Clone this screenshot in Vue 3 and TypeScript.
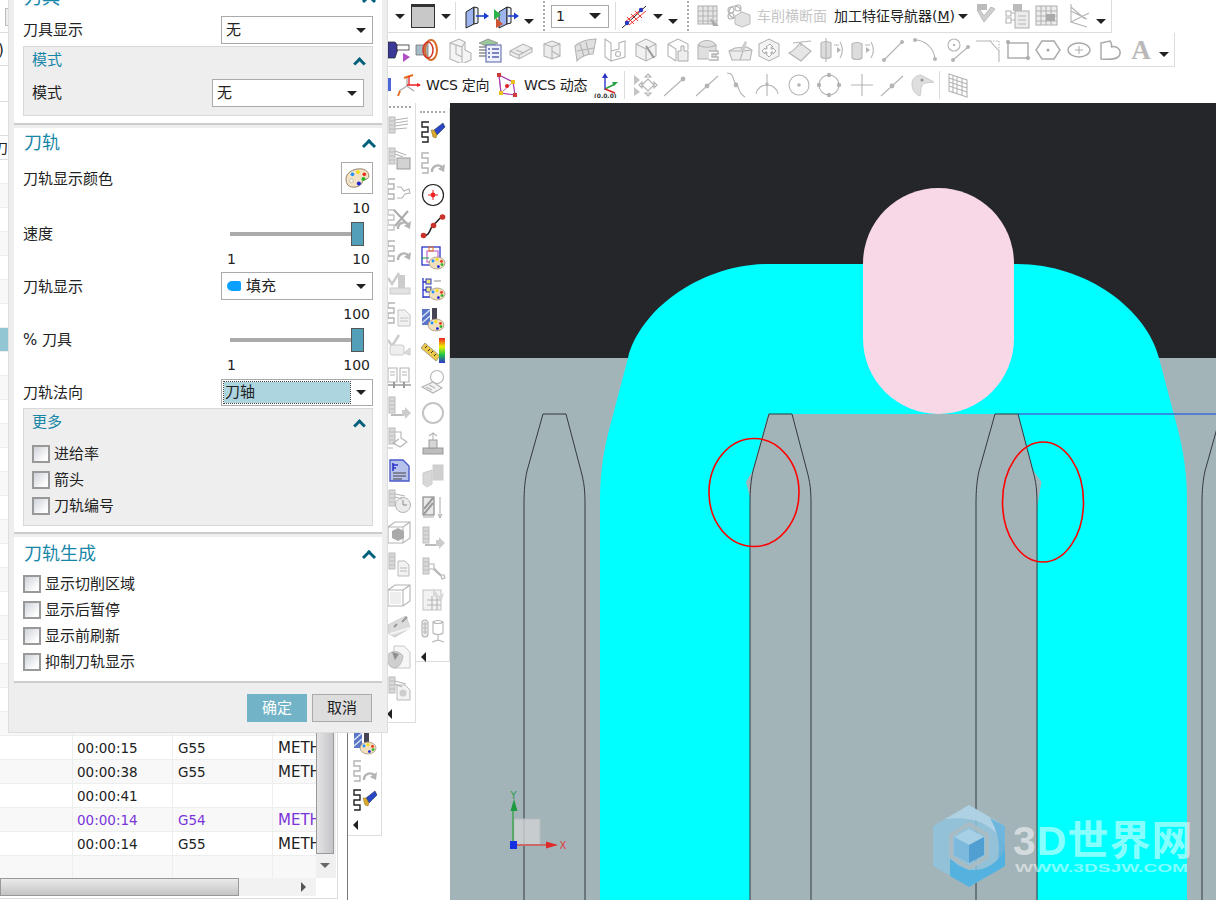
<script setup lang="ts">
type Kind = 'i' | 'a' | 'al' | 'g' | 's' | 't' | 'nav' | 'sel' | 'wcs'
interface Raw { k: Kind; c: number; w: number; n?: string; text?: string }
interface Placed extends Raw { ml: number }

function place(items: Raw[], start: number): Placed[] {
  let right = start
  return items.map((it) => {
    const left = it.c - it.w / 2
    const ml = left - right
    right = left + it.w
    return { ...it, ml }
  })
}
const ic = (c: number, n: string, w = 26): Raw => ({ k: 'i', c, w, n })

const g = (s: string) => `<g fill="none" stroke="#b4b4b4" stroke-width="1.1">${s}</g>`
const zig = (col: string) => `<path d="M9 2H2v5h6v5H2v5h6v5H2" fill="none" stroke="${col}" stroke-width="1.4"/>`
const mill = `<g stroke="#bdbdbd" fill="#d8d8d8"><rect x="3" y="2" width="6" height="16"/><path d="M3 6h6M3 10h6M3 14h6" fill="none"/></g>`
const pal = (x: number, y: number) => `<g transform="translate(${x} ${y})"><ellipse cx="8" cy="6" rx="8" ry="6" fill="#f1dfbd" stroke="#9a8a70" stroke-width=".7"/><circle cx="4" cy="4" r="1.4" fill="#1e90ff"/><circle cx="8" cy="2.6" r="1.4" fill="#f4e000"/><circle cx="12.5" cy="4.4" r="1.4" fill="#e8331c"/><circle cx="13" cy="7.6" r="1.4" fill="#28b528"/><circle cx="9.4" cy="9.6" r="1.4" fill="#1a22d0"/></g>`
const back = `<path d="M12 21a6 6 0 0 1 10-5" fill="none" stroke="#b4b4b4" stroke-width="2.4"/><path d="M25 13l-1 8-6-3z" fill="#b4b4b4"/>`

const icons: Record<string, string> = {
  solid: `<rect x="1.5" y="1.5" width="23" height="23" fill="#c8c8c8" stroke="#333"/><rect x="1" y="1" width="24" height="3" fill="#333"/>`,
  ext1: `<path d="M2 9l8-5v17l-8 4z" fill="#9db4ee" stroke="#222"/><path d="M10 4l4 1v15l-4 1z" fill="#e8edfa" stroke="#222"/><path d="M12 13h10" stroke="#1c3fd0" stroke-width="1.6"/><path d="M25 13l-5-3.5v7z" fill="#1c3fd0"/>`,
  ext2: `<path d="M6 9l8-5v17l-8 4z" fill="#9db4ee" stroke="#222"/><path d="M14 4l4 1v15l-4 1z" fill="#e8edfa" stroke="#222"/><path d="M1 6l7 6-7 5z" fill="#2fb24a"/><path d="M3 15l7 6-7 4z" fill="#cc5533"/><path d="M15 13h8" stroke="#1c3fd0" stroke-width="1.6"/><path d="M26 13l-5-3.5v7z" fill="#1c3fd0"/>`,
  hatch: `<path d="M1 25L25 3" stroke="#222"/><path d="M6 14l7 7M10 11l7 7M14 8l7 7M4 19l18-14M8 22l17-14" stroke="#e22" stroke-width=".9"/><circle cx="6" cy="20" r="2.2" fill="#2438c8"/><circle cx="20" cy="7" r="2.2" fill="#2438c8"/>`,
  table: g(`<rect x="3" y="3" width="19" height="18" fill="#e6e6e6"/><path d="M3 8h19M3 13h19M3 18h19M8 3v18M13 3v18M18 3v18"/>`) + `<path d="M15 15l9 8h-6z" fill="#aaa"/>`,
  gear: g(`<circle cx="9" cy="9" r="6"/><circle cx="5" cy="7" r="3"/><circle cx="12" cy="5" r="3"/><circle cx="5" cy="13" r="3"/>`) + `<path d="M9 13l7-4 8 3v9l-8 3-7-3z" fill="#e2e2e2" stroke="#bbb"/>`,
  g1: `<rect x="5" y="1" width="10" height="6" fill="#bbb"/>` + `<path d="M5 7l7 12 11-13-4-2-7 9-4-6z" fill="#cfcfcf" stroke="#bbb"/>`,
  g2: g(`<rect x="2" y="8" width="5" height="5"/><rect x="2" y="15" width="5" height="5"/><rect x="11" y="8" width="14" height="17" fill="#ececec"/><path d="M14 13h8M14 17h8M14 21h8M7 10h4M7 17h4"/>`) + `<rect x="9" y="1" width="9" height="7" fill="#bbb"/>`,
  g3: g(`<rect x="2" y="3" width="21" height="19" fill="#ececec"/><path d="M2 8h21M2 13h21M2 18h21M7 3v19M12 3v19M17 3v19"/>`) + `<rect x="12" y="11" width="9" height="7" fill="#aaa"/>`,
  g4: g(`<path d="M6 1v18l16 5M6 19l18-9M6 8l16 8M6 4l14 12"/>`),
  bluepart: `<rect x="23" y="6" width="3" height="13" fill="#4a66d8"/>`,
  tool: `<path d="M1 5h7l3 4h8v3h-8l-3 9H1z" fill="#3a3a96" stroke="#222" stroke-width=".7"/><rect x="10" y="8" width="12" height="5" fill="#fff" stroke="#333" stroke-width=".8"/><path d="M16 16l7 4-7 5z" fill="#b14fc4"/>`,
  spindle: `<path d="M2 8h8l4-4v18l-4-4H2z" fill="#a9bdc9" stroke="#666" stroke-width=".7"/><ellipse cx="17" cy="13" rx="6" ry="10" fill="none" stroke="#d86a2a" stroke-width="2"/><ellipse cx="14" cy="13" rx="5" ry="8" fill="none" stroke="#d0342a" stroke-width="1.5"/>`,
  wirehouse: g(`<path d="M3 6l9-4 6 3v8l6 3v7l-9 4-12-5z" fill="#f4f4f4"/><path d="M3 6l12 4v18M15 10l3-5M9 8v9l6 3"/>`),
  stack: `<path d="M2 6l9-4 10 4-10 4z" fill="#9cc69c" stroke="#777" stroke-width=".6"/><path d="M2 10h10M2 13h10M2 16h10M2 19h10" stroke="#555"/><rect x="9" y="8" width="15" height="17" fill="#eef1fb" stroke="#5560aa"/><path d="M11 12h2M15 12h7M11 16h2M15 16h7M11 20h2M15 20h7" stroke="#5560aa" stroke-width="1.3"/>`,
  plate: g(`<path d="M2 14l13-7 9 4v4l-13 7-9-4z" fill="#ececec"/><path d="M2 14l9 4v4M11 18l13-7M8 13l8 3"/>`),
  block: g(`<path d="M4 7l8-3 8 3v12l-8 3-8-3z" fill="#ececec"/><path d="M4 7l8 3 8-3M12 10v12"/><path d="M12 14l8 5"/>`) ,
  surf: g(`<path d="M3 9c6-5 15-7 21-7l-3 15C15 17 8 20 5 24z" fill="#e0e0e0"/><path d="M8 7l4 12M14 5l3 12M5 14l17-3"/>`),
  wall: g(`<path d="M3 2v18l6 4V6zM9 24l14-4V4l-6 2v6l-8 2"/><circle cx="16" cy="17" r="2.5"/>`),
  wand: g(`<path d="M3 7l10-5 10 5v12l-10 5-10-5z" fill="#f1f1f1"/><path d="M3 7l10 5 10-5M13 12v12"/>`) + `<path d="M13 9l8 12" stroke="#999" stroke-width="2"/>`,
  hand: g(`<path d="M3 7l10-5 10 5v6M3 7v12l8 5M3 7l8 5v12"/>`) + `<path d="M13 14h3V9h3v5h4v10H13z" fill="#eee" stroke="#aaa"/>`,
  cylpath: g(`<path d="M3 8c4-6 14-6 18 0v14H3z" fill="#dfdfdf"/><path d="M3 8c5 3 13 3 18 0"/><path d="M14 14h9v3h-6v3h6v3h-9" stroke-width="1.4" fill="#fff"/>`),
  tray: g(`<path d="M2 14l6-3 12-1 5 3-2 10H5z" fill="#ececec"/><path d="M2 14h14l9-1M16 14l-3 9"/>`) + `<path d="M13 13l5-9 2 1-3 9z" fill="#ccc"/>`,
  move: g(`<path d="M3 7l10-5 10 5v12l-10 5-10-5z" fill="#f3f3f3"/>`) + `<path d="M14 7l3 3h-2v2h2v-1l3 3-3 3v-2h-2v2h1l-3 3-3-3h1v-2h-2v2l-3-3 3-3v1h2v-2h-1z" fill="#fff" stroke="#999" stroke-width=".8"/>`,
  curved: g(`<path d="M2 16c4-2 8-6 11-10l11 8c-3 3-7 7-10 10z" fill="#e6e6e6"/><path d="M6 6l18-2M14 5l0 4"/>`),
  cyl1: g(`<path d="M3 6c2-2 8-2 10 0v14c-2 2-8 2-10 0z" fill="#dcdcdc"/><path d="M8 1v24M16 8h5M22 5c3 5 3 11 0 16"/>`) + `<path d="M19 10l4 3-4 3z" fill="#b4b4b4"/>`,
  cyl2: g(`<path d="M3 7c2-2 8-2 10 0v14c-2 2-8 2-10 0z" fill="#dcdcdc"/><path d="M16 8h5M22 5c3 5 3 11 0 16"/>`) + `<path d="M17 10l4 3-4 3z" fill="#b4b4b4"/>`,
  line: g(`<path d="M4 23L22 5"/>`) + `<circle cx="4" cy="23" r="2" fill="#b4b4b4"/><circle cx="22" cy="5" r="2" fill="#b4b4b4"/>`,
  arc: g(`<path d="M3 3c10 0 19 8 20 19"/>`) + `<circle cx="3" cy="3" r="2" fill="#b4b4b4"/><circle cx="23" cy="22" r="2" fill="#b4b4b4"/>`,
  arcc: g(`<circle cx="9" cy="8" r="6"/><path d="M8 23L23 10"/>`) + `<circle cx="9" cy="8" r="1" fill="#999"/><circle cx="8" cy="23" r="2" fill="#b4b4b4"/><circle cx="23" cy="10" r="2" fill="#b4b4b4"/>`,
  fillet: g(`<path d="M1 4h14l9 10v11"/><path d="M15 4h9v10" stroke-dasharray="1.5 1.5"/>`),
  rect: `<rect x="3" y="6" width="20" height="15" fill="none" stroke="#a8a8a8" stroke-width="1.4"/><circle cx="3" cy="5" r="2" fill="#aaa"/><circle cx="23" cy="21" r="2" fill="#aaa"/>`,
  hex: `<path d="M7 4h12l6 9-6 9H7l-6-9z" fill="none" stroke="#a8a8a8" stroke-width="1.4"/><circle cx="13" cy="13" r="1.6" fill="#aaa"/>`,
  ell: `<ellipse cx="13" cy="13" rx="11" ry="7" fill="none" stroke="#a8a8a8" stroke-width="1.4"/><path d="M13 9v8M9 13h8" stroke="#aaa"/>`,
  spline: `<path d="M4 6l9-2c2 3 2 5 1 6 6-2 10 3 9 7-1 5-7 6-19 5z" fill="none" stroke="#a8a8a8" stroke-width="1.4"/>`,
  wcs1: `<path d="M11 14l-8 5M11 14v-9M11 14l7 5" stroke="#aaa" stroke-width="1.3"/><path d="M4 19l-2 5M8 6l9-3" stroke="#e87020" stroke-width="2"/><path d="M11 13h13M13 4v9" stroke="#e22" stroke-width="1.3"/><path d="M25 13l-4-2v4z" fill="#e22"/>`,
  wcs2: `<path d="M5 3l14 7 2 13-14-2z" fill="none" stroke="#a93cae" stroke-width="1.2"/><path d="M5 3l2 18M19 10L7 21" stroke="#a93cae" stroke-width=".8"/><rect x="3" y="1" width="4" height="4" fill="#cc3a3a"/><rect x="17" y="8" width="4" height="4" fill="#e9c01f"/><rect x="19" y="21" width="4" height="4" fill="#cc3a3a"/><rect x="5" y="19" width="4" height="4" fill="#e9c01f"/><circle cx="13" cy="14" r="2" fill="#d22"/>`,
  wcs3: `<path d="M11 18V4" stroke="#2a35c8" stroke-width="1.4"/><path d="M11 1l-3 5h6z" fill="#2a35c8"/><path d="M11 17l10-5" stroke="#25a040" stroke-width="1.4"/><path d="M24 10l-6 0 2 4z" fill="#25a040"/><path d="M11 17l10 4" stroke="#d22" stroke-width="1.4"/><text x="0" y="26" font-size="6" font-weight="700" font-family="DejaVu Sans" fill="#333">(0,0,0)</text>`,
  ptdlg: `<path d="M2 3l6 5-6 5zM2 15l6 5-6 4z" fill="#c4c4c4"/>` + g(`<path d="M10 13l6-6 6 6-6 6zM16 2l3 3h-6zM16 24l3-3h-6zM25 13l-3 3v-6zM7 13l3 3v-6z"/>`),
  lnpt: g(`<path d="M2 24L22 6"/>`) + `<circle cx="21" cy="7" r="2.4" fill="#b4b4b4"/>`,
  lnmid: g(`<path d="M2 24L24 4"/>`) + `<circle cx="13" cy="14" r="2.4" fill="#b4b4b4"/>`,
  sc: g(`<path d="M4 1c8 0 5 8 9 11s1 8 9 13"/>`) + `<circle cx="13" cy="13" r="2.4" fill="#b4b4b4"/>`,
  arcv: g(`<path d="M2 22c2-12 20-12 22 0M13 2v22"/>`) + `<circle cx="13" cy="12" r="1.6" fill="#b4b4b4"/>`,
  cir: g(`<circle cx="13" cy="13" r="10"/>`) + `<circle cx="13" cy="13" r="1.8" fill="#b4b4b4"/>`,
  cir4: g(`<circle cx="13" cy="13" r="10"/>`) + `<g fill="#b4b4b4"><circle cx="13" cy="3" r="2.2"/><circle cx="13" cy="23" r="2.2"/><circle cx="3" cy="13" r="2.2"/><circle cx="23" cy="13" r="2.2"/></g>`,
  plus: g(`<path d="M13 2v22M2 13h22"/>`),
  curvesurf: `<path d="M3 12c0-6 5-9 9-9l13 7-8 1c-3 0-5 3-5 7l-1 6c-5-2-8-6-8-12z" fill="#dedede" stroke="#ccc"/><circle cx="13" cy="8" r="1.6" fill="#999"/>`,
  grid: g(`<path d="M4 2l18 6v17L4 19zM4 6l18 6M4 10l18 6M4 14l18 6M8 3v17M12 5v17M17 6v17"/>`),
  flash: zig('#222') + `<path d="M14 10l9-7 2 4-8 8z" fill="#2a46c8" stroke="#123" stroke-width=".5"/><path d="M11 10l3 0 3 5-1 3-3-1z" fill="#d9a92c" stroke="#8a7020" stroke-width=".5"/>`,
  pback: zig('#b4b4b4') + back,
  target: `<circle cx="13" cy="13" r="10.5" fill="none" stroke="#222" stroke-width="1.2"/><path d="M13 8v10M8 13h10" stroke="#e22"/><circle cx="13" cy="13" r="2.4" fill="#e22"/>`,
  curve: `<path d="M3 23c8 0 7-10 11-12s4-6 9-7" fill="none" stroke="#222" stroke-width="1.5"/><g fill="#c8332a"><circle cx="3.5" cy="22.5" r="2.8"/><circle cx="13.5" cy="12.5" r="2.8"/><circle cx="22.5" cy="4" r="2.8"/></g>`,
  palsq: `<rect x="2" y="2" width="18" height="18" fill="none" stroke="#2a35c8" stroke-width="1.3"/><rect x="7" y="6" width="11" height="11" fill="none" stroke="#b14fc4"/><rect x="9" y="2" width="4" height="4" fill="none" stroke="#e87020"/><path d="M1 13h8" stroke="#25a040"/>` + pal(9, 12),
  paltree: `<path d="M3 2v20M3 6h4M3 14h4M3 21h7" stroke="#2a35c8" stroke-width="1.3"/><rect x="6" y="3" width="5" height="5" fill="#e8e57a" stroke="#2a35c8"/><rect x="6" y="11" width="5" height="5" fill="#e8e57a" stroke="#2a35c8"/><path d="M14 5h7" stroke="#888"/>` + pal(9, 12),
  paltool: `<rect x="2" y="2" width="8" height="16" fill="#5a74c8"/><path d="M2 10L10 3M2 16L10 9" stroke="#d9e3f5" stroke-width="1.5"/><rect x="12" y="1" width="5" height="13" fill="#445"/>` + pal(8, 12),
  ruler: `<path d="M1 10l15 13 4-5L5 5z" fill="#e9c84a" stroke="#777" stroke-width=".6"/><path d="M5 10l2-2M8 13l2-2M11 15l2-2M14 18l2-2" stroke="#333"/><defs><linearGradient id="rb" x1="0" y1="0" x2="0" y2="1"><stop offset="0" stop-color="#e22"/><stop offset=".35" stop-color="#ee0"/><stop offset=".65" stop-color="#2c4"/><stop offset="1" stop-color="#33c"/></linearGradient></defs><rect x="19" y="0" width="6" height="25" fill="url(#rb)"/>`,
  tag: g(`<circle cx="17" cy="8" r="6.5"/><path d="M2 18l11-5 9 6-9 5z" fill="#f2f2f2"/><path d="M6 18l6 3M9 16l6 3"/>`),
  ring: `<circle cx="13" cy="13" r="10" fill="none" stroke="#c4c4c4" stroke-width="2"/>`,
  base: `<rect x="3" y="17" width="20" height="6" fill="#bdbdbd" stroke="#999"/><rect x="9" y="9" width="8" height="8" fill="#d6d6d6" stroke="#999"/>` + g(`<path d="M13 9V2M9 5l4-3 4 3"/>`),
  cylpair: `<path d="M3 10l9-3v14l-5 3-4-3z" fill="#d8d8d8" stroke="#ccc"/><rect x="13" y="2" width="10" height="15" fill="#cfcfcf" stroke="#ccc"/>`,
  hatchd: `<rect x="3" y="3" width="11" height="18" fill="#e8e8e8" stroke="#777"/><path d="M4 15L13 4M4 20L13 9" stroke="#999" stroke-width="2"/><path d="M3 23h11" stroke="#aaa"/><path d="M20 3v20M18 20l2 4 2-4" fill="none" stroke="#aaa"/>`,
  millarr: mill + `<path d="M5 20h12" stroke="#bbb" stroke-width="2"/><path d="M16 15h3v-3l6 6-6 6v-3h-3z" fill="#ccc"/>`,
  wrench: mill + g(`<path d="M9 8h5v4l7 7h3l1 3-3 1-1-3-8-7H9"/>`),
  paltable: `<rect x="3" y="3" width="18" height="20" fill="#f2f2f2" stroke="#c4c4c4"/>` + g(`<path d="M7 13h14M7 18h14M12 9v14M17 9v14"/>`) + `<path d="M13 1l6 8 5-3-2 7-9-4z" fill="#d8d8d8"/>`,
  iocyl: g(`<rect x="2" y="2" width="6" height="17" rx="3" fill="#eee"/><circle cx="5" cy="6" r="1.2"/><circle cx="5" cy="10" r="1.2"/><circle cx="5" cy="14" r="1.2"/><path d="M13 4c2-2 8-2 10 0v11c-2 2-8 2-10 0zM13 4c2 2 8 2 10 0M18 17v5l-6 2M18 22l6 2"/>`),
  mill1: mill + g(`<path d="M9 5l13-2M9 8l13-2M9 11l13-2M9 14l12-1"/>`),
  millbox: mill + `<rect x="11" y="12" width="13" height="11" fill="#d2d2d2" stroke="#999"/>` + g(`<path d="M9 5l11 4M9 8l8 3"/>`),
  pwrench: zig('#b4b4b4') + g(`<path d="M11 10h4l3 4 5-2 1 4-5 1-3 4h-5"/>`),
  px: zig('#c4c4c4') + `<path d="M8 2l15 16M22 3L9 18" stroke="#aaa" stroke-width="2"/>` + back,
  checkmill: `<path d="M2 8l4 6 7-11" fill="none" stroke="#ccc" stroke-width="2.5"/><rect x="12" y="5" width="7" height="13" fill="#ccc"/><rect x="4" y="18" width="20" height="6" fill="#e2e2e2" stroke="#ccc"/>`,
  pdoc: zig('#b4b4b4') + `<path d="M12 9h7l5 5v11H12z" fill="#f1f1f1" stroke="#c4c4c4"/><path d="M14 17h8M14 20h8" stroke="#c4c4c4"/>`,
  checkm: `<path d="M2 7l4 6 7-11" fill="none" stroke="#ccc" stroke-width="2.5"/><rect x="4" y="12" width="14" height="10" rx="2" fill="#eee" stroke="#ccc"/><path d="M18 20l6-5v7z" fill="#ddd" stroke="#ccc"/>`,
  books: g(`<path d="M2 4h9v14H2zM14 4h9v14h-9zM4 8h5M4 11h5M16 8h5M16 11h5"/>`) + `<path d="M1 21h24" stroke="#b4b4b4" stroke-width="2"/><path d="M8 18v6M18 18v6" stroke="#999" stroke-width="2"/>`,
  millmach: mill + g(`<path d="M9 6h6v6l6 4-7 5-7-4 6-4M2 22h5"/>`),
  docblue: `<path d="M4 3h13l6 6v15H4z" fill="#b7c2ec" stroke="#4a5ac8" stroke-width="1.4"/><path d="M7 6v8M7 8h5M7 11h3" stroke="#2a35c8" stroke-width="1.6"/><path d="M7 16h13M7 19h13M7 22h9" stroke="#444"/>`,
  millclock: mill + `<circle cx="17" cy="17" r="7.5" fill="#ececec" stroke="#b4b4b4"/><path d="M17 12v5h4" stroke="#888" fill="none"/>` + g(`<path d="M9 6l10 2M9 9l7 2"/>`),
  cubewire: g(`<path d="M2 8l7-5h15v16l-7 5H2zM2 8h15v16M17 8l7-5"/>`) + `<path d="M6 12l6-3 6 3v7l-6 3-6-3z" fill="#aaa"/>`,
  milldoc: mill + `<path d="M12 10h7l4 4v11H12z" fill="#f2f2f2" stroke="#bbb"/><path d="M14 17h7M14 20h7" stroke="#bbb"/>`,
  wirebox: g(`<path d="M2 8l7-5h15v16l-7 5H2zM2 8h15v16M17 8l7-5"/>`) + `<rect x="4" y="10" width="11" height="12" fill="#eee"/>`,
  pin: `<path d="M2 12L20 3l4 12-15 9-6-3z" fill="#dcdcdc" stroke="#ccc"/><path d="M8 14l3-3M16 9l5-5" stroke="#999" stroke-width="2"/><path d="M4 21l20-6" stroke="#f5f5f5" stroke-width="2"/>`,
  bowl: `<path d="M8 2h10l6 6v16H8z" fill="#f6f6f6" stroke="#c8c8c8"/><path d="M1 12c3-6 12-6 16 0-1 8-5 12-9 12s-7-5-7-12z" fill="#cfcfcf" stroke="#bbb"/><path d="M6 8l7 2-4 6z" fill="#8e8e8e"/>`,
  milldisc: mill + `<path d="M11 10h8l5 5v10H11z" fill="#f2f2f2" stroke="#bbb"/><circle cx="17" cy="18" r="3.5" fill="#cdcdcd"/>` + g(`<path d="M9 6l11 3M9 9l7 3"/>`),
}

const row1 = place([
  { k: 'a', c: 400, w: 12 }, ic(423, 'solid'), { k: 'a', c: 446, w: 12 }, { k: 's', c: 456, w: 3 },
  ic(477, 'ext1'), ic(506, 'ext2'), { k: 'al', c: 529, w: 12 }, { k: 'g', c: 544, w: 3 },
  { k: 'sel', c: 580, w: 58, text: '1' }, { k: 's', c: 616, w: 3 }, ic(634, 'hatch'),
  { k: 'a', c: 658, w: 12 }, { k: 'al', c: 673, w: 12 }, { k: 'g', c: 688, w: 3 },
  ic(708, 'table'), ic(739, 'gear'), { k: 't', c: 792, w: 70, text: '车削横断面' },
  { k: 'nav', c: 894.5, w: 121 }, { k: 'a', c: 963, w: 12 },
  ic(985, 'g1'), ic(1017, 'g2'), ic(1047, 'g3'), ic(1078, 'g4'), { k: 'al', c: 1101, w: 12 },
], 385)

const row2Names: [number, string][] = [
  [400, 'tool'], [427, 'spindle'], [460, 'wirehouse'], [490, 'stack'], [521, 'plate'], [553, 'block'],
  [585, 'surf'], [615, 'wall'], [646, 'wand'], [678, 'hand'], [708, 'cylpath'], [740, 'tray'],
  [769, 'move'], [800, 'curved'], [831, 'cyl1'], [862, 'cyl2'], [893, 'line'], [925, 'arc'],
  [958, 'arcc'], [988, 'fillet'], [1018, 'rect'], [1048, 'hex'], [1079, 'ell'], [1110, 'spline'],
]
const row2 = place([
  ...row2Names.map(([c, n]) => ic(c, n)),
  { k: 'i', c: 1141, w: 26, n: 'aglyph' },
  { k: 'al', c: 1164, w: 12 },
], 385)

const row3 = place([
  ic(378, 'bluepart'), ic(409, 'wcs1'), { k: 'wcs', c: 457.5, w: 63, text: 'WCS 定向' }, ic(507, 'wcs2'),
  { k: 'wcs', c: 556, w: 64, text: 'WCS 动态' }, ic(607, 'wcs3'), { k: 's', c: 625, w: 3 },
  ic(645, 'ptdlg'), ic(675, 'lnpt'), ic(707, 'lnmid'), ic(736, 'sc'), ic(767, 'arcv'), ic(799, 'cir'),
  ic(829, 'cir4'), ic(862, 'plus'), ic(892, 'lnmid'), ic(922, 'curvesurf'), { k: 's', c: 940, w: 3 }, ic(958, 'grid'),
], 385)

const col1 = ['mill1', 'millbox', 'pwrench', 'px', 'pback', 'checkmill', 'pdoc', 'checkm', 'books', 'millarr', 'millmach', 'docblue', 'millclock', 'cubewire', 'milldoc', 'wirebox', 'pin', 'bowl', 'milldisc']
const col2 = ['flash', 'pback', 'target', 'curve', 'palsq', 'paltree', 'paltool', 'ruler', 'tag', 'ring', 'base', 'cylpair', 'hatchd', 'millarr', 'wrench', 'paltable', 'iocyl']
const col3 = ['paltool', 'pback', 'flash']

interface Row { time: string; wcs: string; m: string; cls: string }
const blank: Row = { time: '', wcs: '', m: '', cls: '' }
const rows: Row[] = [
  ...Array.from({ length: 24 }, (_, i) => ({ ...blank, cls: i === 7 ? 'sel-row' : '' })),
  { time: '00:00:15', wcs: 'G55', m: 'METH', cls: '' },
  { time: '00:00:38', wcs: 'G55', m: 'METH', cls: '' },
  { time: '00:00:41', wcs: '', m: '', cls: '' },
  { time: '00:00:14', wcs: 'G54', m: 'METH', cls: 'purple' },
  { time: '00:00:14', wcs: 'G55', m: 'METH', cls: '' },
  { ...blank },
]

const tools = [524, 750, 976, 1202]
const toolPath = (x: number) =>
  `M${x} 900V503C${x} 490 ${x + 1} 480 ${x + 3} 471L${x + 19} 414H${x + 42}L${x + 57} 471C${x + 60} 482 ${x + 61} 490 ${x + 61} 503V900`

const checks1 = ['进给率', '箭头', '刀轨编号']
const checks2 = ['显示切削区域', '显示后暂停', '显示前刷新', '抑制刀轨显示']
</script>

<template>
  <div class="app">
    <aside class="left">
      <div class="left-inner">
        <div class="strip s1"><span class="mini-box"></span></div>
        <div class="strip s2"><span class="paren">)</span></div>
        <div class="strip s3"></div>
        <div class="strip s4"></div>
        <div class="thead"><span>刀具</span></div>
        <div class="tbody">
          <div class="rows">
            <div v-for="(r, i) in rows" :key="i" class="row" :class="r.cls">
              <span class="cell"></span>
              <span class="cell">{{ r.time }}</span>
              <span class="cell">{{ r.wcs }}</span>
              <span class="cell">{{ r.m }}</span>
            </div>
          </div>
          <div class="vscroll">
            <div class="vthumb"></div>
            <div class="varrow"></div>
          </div>
        </div>
        <div class="hscroll">
          <div class="hthumb"></div>
          <div class="harrow"></div>
        </div>
      </div>
    </aside>

    <main class="right">
      <div class="tb r1">
        <div v-for="(it, i) in row1" :key="i" class="item" :class="'k-' + it.k" :style="{ width: it.w + 'px', marginLeft: it.ml + 'px' }">
          <svg v-if="it.k === 'i'" viewBox="0 0 26 26" width="26" height="26" v-html="icons[it.n as string]"></svg>
          <template v-else-if="it.k === 't'">{{ it.text }}</template>
          <template v-else-if="it.k === 'nav'">加工特征导航器(<u>M</u>)</template>
          <template v-else-if="it.k === 'sel'"><span>{{ it.text }}</span><i class="tri"></i></template>
          <i v-else-if="it.k === 'a' || it.k === 'al'" class="tri"></i>
        </div>
      </div>
      <div class="tb r2">
        <div v-for="(it, i) in row2" :key="i" class="item" :class="'k-' + it.k" :style="{ width: it.w + 'px', marginLeft: it.ml + 'px' }">
          <span v-if="it.n === 'aglyph'" class="a-glyph">A</span>
          <svg v-else-if="it.k === 'i'" viewBox="0 0 26 26" width="26" height="26" v-html="icons[it.n as string]"></svg>
          <i v-else-if="it.k === 'al'" class="tri"></i>
        </div>
      </div>
      <div class="tb r3">
        <div v-for="(it, i) in row3" :key="i" class="item" :class="'k-' + it.k" :style="{ width: it.w + 'px', marginLeft: it.ml + 'px' }">
          <svg v-if="it.k === 'i'" viewBox="0 0 26 26" width="26" height="26" v-html="icons[it.n as string]"></svg>
          <template v-else-if="it.k === 'wcs'">{{ it.text }}</template>
        </div>
      </div>

      <div class="lower">
        <div class="vcol c3">
          <div v-for="n in col3" :key="n" class="vcell short"><svg viewBox="0 0 26 26" width="26" height="26" v-html="icons[n]"></svg></div>
          <div class="varr short-arr"><i></i></div>
        </div>
        <div class="vcol c1">
          <div class="grip"></div>
          <div v-for="n in col1" :key="n" class="vcell"><svg viewBox="0 0 26 26" width="26" height="26" v-html="icons[n]"></svg></div>
          <div class="varr"><i></i></div>
        </div>
        <div class="vcol c2">
          <div class="grip g2"></div>
          <div v-for="n in col2" :key="n" class="vcell"><svg viewBox="0 0 26 26" width="26" height="26" v-html="icons[n]"></svg></div>
          <div class="varr"><i></i></div>
        </div>

        <svg class="view" viewBox="450 103 766 797" width="766" height="797">
          <rect x="450" y="103" width="766" height="255" fill="#24262a" />
          <rect x="450" y="358" width="766" height="542" fill="#a3b4b9" />
          <path
            d="M600 900V500C600 465 606 440 613 415L628 358C640 310 700 264 770 264H1017C1087 264 1147 310 1159 358L1174 415C1181 440 1187 465 1187 500V900H1037V508L1041.5 482L1033 470L1018 414H768L753 470L746 482L750 497V900Z"
            fill="#00ffff"
          />
          <rect x="863" y="188" width="151" height="226" rx="75.5" fill="#f8d7e6" />
          <path d="M1018 414H1216" stroke="#3a6fd8" stroke-width="1.5" />
          <path v-for="x in tools" :key="x" :d="toolPath(x)" fill="none" stroke="#33393c" stroke-width="1" />
          <ellipse cx="754" cy="492.5" rx="45" ry="54" fill="none" stroke="#f00" stroke-width="1.6" />
          <ellipse cx="1043" cy="502" rx="40.5" ry="60" fill="none" stroke="#f00" stroke-width="1.6" />

          <rect x="514" y="819" width="26" height="26" fill="#d0d2d4" fill-opacity=".8" stroke="#b8bcbe" />
          <path d="M513 845V806" stroke="#58a868" stroke-width="2" />
          <path d="M514 799l-3.5 12h7z" fill="#1f9a3f" />
          <path d="M514 845h42" stroke="#c86a6a" stroke-width="2" />
          <path d="M558 845l-12-3.5v7z" fill="#e02a2a" />
          <rect x="510" y="841" width="7" height="8" fill="#1530e0" />
          <text x="513.5" y="799" class="ax y">Y</text>
          <text x="563" y="849" class="ax x">X</text>

          <g class="logo">
            <path d="M969 805L1005 826V866L969 887L933 866V826Z" fill="#8fc6e0" fill-opacity=".8" />
            <path d="M969 805L1005 826V846C995 825 975 815 945 819Z" fill="#b5d6e6" fill-opacity=".8" />
            <path d="M1005 826V866L985 878C1000 865 1005 845 990 818Z" fill="#63b2dd" fill-opacity=".85" />
            <path d="M1005 866L969 887L950 876V858C965 875 990 875 1005 850Z" fill="#4fb0e0" fill-opacity=".9" />
            <path d="M969 824L987 835V857L969 868L951 857V835Z" fill="none" stroke="#a9bcc4" stroke-width="4" />
            <path d="M969 829L984 837L969 845L954 837Z" fill="#a7d0e6" />
            <path d="M954 837L969 845V863L954 855Z" fill="#7cb9dc" />
            <path d="M984 837L969 845V863L984 855Z" fill="#519fd2" />
          </g>
          <text x="1013" y="855" class="wm-big">3D世界网</text>
          <text x="1015" y="872" class="wm-small" textLength="173" lengthAdjust="spacingAndGlyphs">WWW.3DSJW.COM</text>
        </svg>
      </div>
    </main>

    <section class="dialog">
      <div class="sec first">
        <div class="sec-head"><span>刀具</span><i class="chev"></i></div>
        <div class="frow first-row">
          <label>刀具显示</label>
          <div class="select"><span>无</span><i class="tri"></i></div>
        </div>
        <div class="group mode">
          <div class="group-head"><span>模式</span><i class="chev small"></i></div>
          <div class="frow in-group">
            <label>模式</label>
            <div class="select"><span>无</span><i class="tri"></i></div>
          </div>
        </div>
      </div>

      <div class="sec second">
        <div class="sec-head"><span>刀轨</span><i class="chev"></i></div>
        <div class="frow color-row">
          <label>刀轨显示颜色</label>
          <button class="pal-btn" type="button">
            <svg viewBox="0 0 28 24" width="26" height="22">
              <path d="M2 13C2 6 10 2 17 2s10 4 10 8-6 3-7 6c-1 4-5 6-10 6S2 19 2 13z" fill="#f3e2c4" stroke="#8a7a60" />
              <circle cx="9" cy="8" r="2" fill="#1e90ff" />
              <circle cx="15" cy="5.5" r="2" fill="#f4e000" />
              <circle cx="22" cy="8" r="2" fill="#e8331c" />
              <circle cx="21" cy="13" r="2.2" fill="#28b528" />
              <circle cx="16" cy="18" r="2.2" fill="#1a22d0" />
              <circle cx="8" cy="15" r="2" fill="#fff" stroke="#bba" />
            </svg>
          </button>
        </div>
        <div class="slider">
          <span class="val">10</span>
          <label>速度</label>
          <div class="track"><b></b><i></i></div>
          <div class="ends"><span>1</span><span>10</span></div>
        </div>
        <div class="frow tight">
          <label>刀轨显示</label>
          <div class="select"><span class="fill-val"><i class="pill"></i>填充</span><i class="tri"></i></div>
        </div>
        <div class="slider">
          <span class="val">100</span>
          <label>% 刀具</label>
          <div class="track"><b></b><i></i></div>
          <div class="ends"><span>1</span><span>100</span></div>
        </div>
        <div class="frow dir-row">
          <label>刀轨法向</label>
          <div class="select focus"><span class="focus-val">刀轴</span><i class="tri"></i></div>
        </div>
        <div class="group more">
          <div class="group-head"><span>更多</span><i class="chev small"></i></div>
          <div class="checks">
            <div v-for="c in checks1" :key="c" class="check"><i class="box"></i>{{ c }}</div>
          </div>
        </div>
      </div>

      <div class="sec third">
        <div class="sec-head"><span>刀轨生成</span><i class="chev"></i></div>
        <div class="checks">
          <div v-for="c in checks2" :key="c" class="check"><i class="box"></i>{{ c }}</div>
        </div>
      </div>

      <div class="actions">
        <button class="ok" type="button">确定</button>
        <button class="cancel" type="button">取消</button>
      </div>
    </section>
  </div>
</template>

<style scoped>
.app {
  position: relative;
  display: flex;
  width: 1216px;
  height: 900px;
  overflow: hidden;
  background: #fff;
  color: #222;
  font: 14px/1.2 "DejaVu Sans", "Noto Sans CJK SC", sans-serif;
}

/* left navigator */
.left { width: 348px; height: 900px; flex: none; border-right: 1px solid #777; box-sizing: border-box; }
.left-inner { width: 338px; height: 899px; border-right: 1px solid #ddd; border-bottom: 1px solid #ddd; box-sizing: border-box; }
.strip { border-bottom: 1px solid #ddd; box-sizing: border-box; position: relative; overflow: hidden; }
.s1 { height: 33px; }
.s2 { height: 33px; }
.s3 { height: 36px; }
.s4 { height: 34px; }
.mini-box { display: block; width: 4px; height: 16px; margin: 8px 0 0 5px; background: #eee; border: 1px solid #bbb; }
.paren { display: block; font-size: 15px; margin: 8px 0 0 -2px; }
.thead { height: 24px; line-height: 24px; border-bottom: 1px solid #ddd; box-sizing: border-box; overflow: hidden; text-indent: -20px; padding-left: 14px; }
.tbody { display: flex; height: 718px; }
.rows { width: 316px; flex: none; overflow: hidden; }
.row { display: grid; grid-template-columns: 73px 100px 100px 43px; height: 24px; box-sizing: border-box; border-bottom: 1px solid #eee; font-size: 13.5px; line-height: 24px; }
.row:nth-child(even) { background: #f8f8f8; }
.row .cell { border-right: 1px solid #eee; padding-left: 4px; overflow: hidden; white-space: nowrap; }
.row .cell:nth-child(3) { padding-left: 5px; }
.row .cell:last-child { border-right: 0; padding-left: 5px; font-size: 15px; }
.sel-row { background: #93c6d3 !important; }
.purple { color: #7a35d8; }
.vscroll { width: 20px; flex: none; background: #f0f0f0; display: flex; flex-direction: column; }
.vthumb { height: 694px; background: linear-gradient(90deg, #e4e4e6, #c4c4c8); border: 1px solid #999; box-sizing: border-box; width: 18px; }
.varrow { width: 0; height: 0; margin: 9px 0 0 4px; border: 4px solid transparent; border-top: 5px solid #666; border-left-width: 5px; border-right-width: 5px; }
.hscroll { display: flex; align-items: center; height: 18px; width: 316px; background: #f2f2f2; }
.hthumb { width: 239px; height: 18px; box-sizing: border-box; background: linear-gradient(#eaeaea, #c4c4c6); border: 1px solid #999; }
.harrow { width: 0; height: 0; margin-left: 62px; border: 4px solid transparent; border-left: 5px solid #555; border-top-width: 5px; border-bottom-width: 5px; }

/* toolbars */
.right { flex: 1; min-width: 0; display: flex; flex-direction: column; }
.tb { display: flex; align-items: center; padding-left: 37px; box-sizing: border-box; }
.r1 { height: 33px; width: 764px; border-right: 1px solid #ddd; border-bottom: 1px solid #ddd; }
.r2 { height: 34px; width: 827px; border-right: 1px solid #ddd; border-bottom: 1px solid #ddd; }
.r3 { height: 36px; }
.item { flex: none; display: flex; align-items: center; justify-content: center; position: relative; }
.item svg { flex: none; }
.k-s { height: 28px; border-left: 1px solid #ddd; box-sizing: border-box; }
.k-g { height: 30px; border-left: 2px dotted #aaa; box-sizing: border-box; }
.k-t { color: #c6c6c6; white-space: nowrap; }
.k-nav { white-space: nowrap; }
.k-wcs { white-space: nowrap; justify-content: flex-start; letter-spacing: -0.3px; }
.k-al { padding-top: 10px; }
.tri { display: block; width: 0; height: 0; border-left: 5px solid transparent; border-right: 5px solid transparent; border-top: 5px solid #222; }
.k-sel { height: 23px; border: 1.5px solid #aaa; box-sizing: border-box; justify-content: space-between; padding: 0 7px 0 4px; font-size: 14px; }
.k-sel .tri { border-left-width: 6px; border-right-width: 6px; border-top-width: 6px; }
.a-glyph { font: 700 27px/26px "Liberation Serif", serif; color: #b8b8b8; }

.lower { flex: 1; display: flex; min-height: 0; }
.vcol { width: 34px; flex: none; box-sizing: border-box; border-right: 1px solid #ddd; border-bottom: 1px solid #ddd; }
.c1 { height: 620px; }
.c2 { height: 554px; margin-top: 5px; }
.c3 { height: 733px; display: flex; flex-direction: column; justify-content: flex-end; }
.grip { height: 6px; box-sizing: border-box; border-top: 2px dotted #aaa; margin: 3px 4px 0; }
.g2 { height: 6.5px; }
.vcell { height: 31.15px; display: flex; align-items: center; justify-content: center; }
.vcell.short { height: 29px; flex: none; }
.varr { height: 21px; display: flex; align-items: center; padding-left: 5px; }
.short-arr { height: 20px; flex: none; }
.varr i { width: 0; height: 0; border-top: 5px solid transparent; border-bottom: 5px solid transparent; border-right: 5px solid #222; }
.view { flex: none; display: block; }
.ax { font: 10px "DejaVu Sans", sans-serif; text-anchor: middle; }
.ax.y { fill: #2f9a50; }
.ax.x { fill: #e03a3a; }
.wm-big { font: 700 41px "Liberation Sans", "Noto Sans CJK SC", sans-serif; letter-spacing: 1px; fill: #fff; fill-opacity: .55; }
.wm-small { font: 700 11.5px "Liberation Sans", sans-serif; fill: #fff; fill-opacity: .5; }

/* dialog */
.dialog {
  position: absolute;
  left: 8px;
  top: -19px;
  width: 380px;
  height: 752px;
  box-sizing: border-box;
  padding: 1px 5px 0;
  background: #eee;
  border: 1px solid #ddd;
  font-size: 15px;
}
.sec { background: #fff; box-sizing: border-box; padding: 0 9px; border-bottom: 2px solid #ccc; margin-bottom: 3px; }
.first { height: 142px; }
.second { height: 406px; }
.third { height: 146px; margin-bottom: 0; }
.sec-head { height: 30px; display: flex; align-items: center; justify-content: space-between; color: #1787a8; font-size: 18px; }
.sec-head span { padding-left: 1px; }
.third .sec-head span { padding-top: 3px; }
.third .sec-head .chev { margin-top: 9px; }
.sec-head .chev { margin-right: -1px; }
.chev { display: block; width: 10px; height: 10px; margin-top: 6px; border-left: 3px solid #00607c; border-top: 3px solid #00607c; transform: rotate(45deg); box-sizing: border-box; }
.chev.small { width: 9px; height: 9px; }
.frow { display: flex; align-items: center; justify-content: space-between; }
.color-row label, .tight label { padding-top: 2px; }
.first-row { margin-top: 3px; }
.select { width: 152px; height: 28px; box-sizing: border-box; border: 1.5px solid #aaa; background: #fff; display: flex; align-items: center; justify-content: space-between; padding: 0 6px 0 4px; }
.group { background: #eee; border: 1px solid #d8d8d8; box-sizing: border-box; }
.mode { height: 70px; margin-top: 2px; padding: 0 8px; }
.more { height: 118px; margin-top: 2px; padding: 0 8px; }
.group-head { height: 26px; display: flex; align-items: center; justify-content: space-between; color: #1787a8; }
.in-group { margin-top: 6px; }
.color-row { margin-top: 4px; height: 32px; }
.pal-btn { width: 32px; height: 32px; box-sizing: border-box; border: 1px solid #aaa; background: #fff; padding: 0; display: flex; align-items: center; justify-content: center; }
.slider { display: grid; grid-template-columns: 207px 143px; margin-top: 4px; align-items: center; font-size: 14px; }
.val { grid-column: 2; text-align: right; height: 20px; line-height: 20px; padding-right: 3px; }
.slider label { grid-row: 2; grid-column: 1; font-size: 15px; margin-top: 4px; }
.track { grid-row: 2; grid-column: 2; height: 24px; margin-top: 4px; display: flex; align-items: center; width: 134px; }
.track b { flex: 1; height: 4px; background: #aaa; }
.track i { width: 13px; height: 24px; box-sizing: border-box; background: #529fb9; border: 1px solid #555; }
.ends { grid-row: 3; grid-column: 2; display: flex; justify-content: space-between; height: 18px; margin: 4px 0 0 -3px; padding-right: 3px; line-height: 18px; }
.tight { margin-top: 4px; }
.fill-val { display: flex; align-items: center; gap: 5px; }
.pill { width: 14px; height: 10px; background: #0aa0ff; border-radius: 5px 2px 2px 5px; margin-left: 1px; }
.dir-row { margin-top: 5px; }
.dir-row .select { height: 27px; }
.focus { padding-left: 2px; }
.focus-val { width: 125px; height: 21px; line-height: 21px; background: #acd5e0; outline: 1px dotted #444; padding-left: 1px; }
.checks { display: flex; flex-direction: column; }
.more .checks { margin-top: 10px; }
.third .checks { margin-top: 8px; }
.check { height: 26px; display: flex; align-items: flex-start; gap: 4px; line-height: 18px; }
.box { width: 18px; height: 18px; box-sizing: border-box; border: 2px solid #999; background: linear-gradient(135deg, #cdd2da, #fdfdfd 80%); flex: none; }
.actions { display: flex; justify-content: flex-end; gap: 5px; padding: 11px 10px 0 0; }
.actions button { width: 60px; height: 28px; font: inherit; padding: 0; box-sizing: border-box; }
.ok { background: #72b3c8; border: 0; color: #fff; }
.cancel { background: #ddd; border: 1.5px solid #aaa; color: #222; }
</style>
